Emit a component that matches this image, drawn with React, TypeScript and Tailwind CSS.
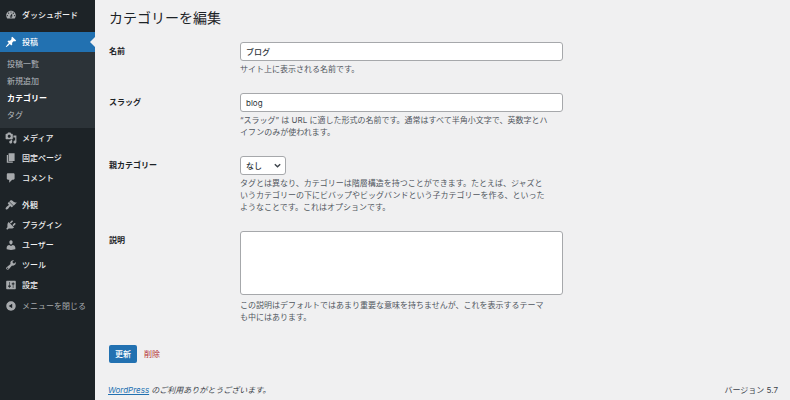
import { useState } from "react";
import type { ReactNode } from "react";
import clsx from "clsx";

const icons = {
  dashboard:
    "M3.76 16h12.48c1.1-1.37 1.76-3.11 1.76-5 0-4.42-3.58-8-8-8s-8 3.58-8 8c0 1.89.66 3.63 1.76 5zM10 4c.55 0 1 .45 1 1s-.45 1-1 1-1-.45-1-1 .45-1 1-1zM6 6c.55 0 1 .45 1 1s-.45 1-1 1-1-.45-1-1 .45-1 1-1zm8 0c.55 0 1 .45 1 1s-.45 1-1 1-1-.45-1-1 .45-1 1-1zm-5.37 5.55L12 7v6c0 1.1-.9 2-2 2s-2-.9-2-2c0-.57.24-1.08.63-1.45zM4 10c.55 0 1 .45 1 1s-.45 1-1 1-1-.45-1-1 .45-1 1-1zm12 0c.55 0 1 .45 1 1s-.45 1-1 1-1-.45-1-1 .45-1 1-1zm-5 3c0-.55-.45-1-1-1s-1 .45-1 1 .45 1 1 1 1-.45 1-1z",
  post: "M10.44 3.02l1.82-1.82 6.36 6.35-1.83 1.82c-1.05-.68-2.48-.57-3.41.36l-.75.75c-.92.93-1.04 2.35-.35 3.41l-1.83 1.82-2.41-2.41-2.8 2.79c-.42.42-3.38 2.71-3.8 2.29s1.86-3.39 2.28-3.81l2.79-2.79L4.1 9.36l1.83-1.82c1.05.69 2.48.57 3.4-.36l.75-.75c.93-.92 1.05-2.35.36-3.41z",
  media:
    "M13 11V4c0-.55-.45-1-1-1h-1.67L9 1H5L3.67 3H2c-.55 0-1 .45-1 1v7c0 .55.45 1 1 1h10c.55 0 1-.45 1-1zM7 4.5c1.38 0 2.5 1.12 2.5 2.5S8.38 9.5 7 9.5 4.5 8.38 4.5 7 5.62 4.5 7 4.5zM14 6h5v10.5c0 1.38-1.12 2.5-2.5 2.5S14 17.88 14 16.5s1.12-2.5 2.5-2.5c.17 0 .34.02.5.05V9h-3V6zm-4 8.05V13h2v3.5c0 1.38-1.12 2.5-2.5 2.5S7 17.88 7 16.5 8.12 14 9.5 14c.17 0 .34.02.5.05z",
  page: "M6 15V2h10v13H6zm-1 1h8v2H3V5h2v11z",
  comments:
    "M5 2h9c1.1 0 2 .9 2 2v7c0 1.1-.9 2-2 2h-2l-5 5v-5H5c-1.1 0-2-.9-2-2V4c0-1.1.9-2 2-2z",
  appearance:
    "M14.48 11.06L7.41 3.99l1.5-1.5c.5-.56 2.3-.47 3.51.32 1.21.8 1.43 1.28 2.91 2.1 1.18.64 2.45 1.26 4.45.85zm-.71.71L6.7 4.7 4.93 6.47c-.39.39-.39 1.02 0 1.41l1.06 1.06c.39.39.39 1.03 0 1.42-.6.6-1.43 1.11-2.21 1.69-.35.26-.7.53-1.01.84C1.43 14.23.4 16.08 1.4 17.07c.99 1 2.84-.03 4.18-1.36.31-.31.58-.66.85-1.02.57-.78 1.08-1.61 1.69-2.21.39-.39 1.02-.39 1.41 0l1.06 1.06c.39.39 1.02.39 1.41 0z",
  plugins:
    "M13.11 4.36L9.87 7.6 8 5.73l3.24-3.24c.35-.34 1.05-.2 1.56.32.52.51.66 1.21.31 1.55zm-8 1.77l.91-1.12 9.01 9.01-1.19.84c-.71.71-2.63 1.16-3.82 1.16H6.14L4.9 17.26c-.59.59-1.54.59-2.12 0-.59-.58-.59-1.53 0-2.12l1.24-1.24v-3.88c0-1.13.4-3.19 1.09-3.89zm7.26 3.97l3.24-3.24c.34-.35 1.04-.21 1.55.31.52.51.66 1.21.31 1.55l-3.24 3.25z",
  users:
    "M10 9.25c-2.27 0-2.73-3.44-2.73-3.44C7 4.02 7.82 2 9.97 2c2.16 0 2.98 2.02 2.71 3.81 0 0-.41 3.44-2.68 3.44zm0 2.57L12.72 10c2.39 0 4.52 2.33 4.52 4.53v2.49s-3.65 1.13-7.24 1.13c-3.65 0-7.24-1.13-7.24-1.13v-2.49c0-2.25 1.94-4.48 4.47-4.48z",
  tools:
    "M16.68 9.77c-1.34 1.34-3.3 1.67-4.95.99l-5.41 6.52c-.99.99-2.59.99-3.58 0s-.99-2.59 0-3.57l6.52-5.42c-.68-1.65-.35-3.61.99-4.95 1.28-1.28 3.12-1.62 4.72-1.06l-2.89 2.89 2.82 2.82 2.86-2.87c.53 1.58.18 3.39-1.08 4.65zM3.81 16.21c.4.39 1.04.39 1.43 0 .4-.4.4-1.04 0-1.43-.39-.4-1.03-.4-1.43 0-.39.39-.39 1.03 0 1.43z",
  settings:
    "M18 16V4c0-.55-.45-1-1-1H3c-.55 0-1 .45-1 1v12c0 .55.45 1 1 1h14c.55 0 1-.45 1-1zM8 11h1c.55 0 1 .45 1 1s-.45 1-1 1H8v1.5c0 .28-.22.5-.5.5s-.5-.22-.5-.5V13H6c-.55 0-1-.45-1-1s.45-1 1-1h1V5.5c0-.28.22-.5.5-.5s.5.22.5.5V11zm5-2h-1c-.55 0-1-.45-1-1s.45-1 1-1h1V5.5c0-.28.22-.5.5-.5s.5.22.5.5V7h1c.55 0 1 .45 1 1s-.45 1-1 1h-1v5.5c0 .28-.22.5-.5.5s-.5-.22-.5-.5V9z",
  collapse:
    "M10 2.16c4.33 0 7.84 3.51 7.84 7.84s-3.51 7.84-7.84 7.84S2.16 14.33 2.16 10 5.67 2.16 10 2.16zm2 11.72V6.12L6.18 9.97z",
};

type IconName = keyof typeof icons;

const contentMenu: { icon: IconName; label: string }[] = [
  { icon: "media", label: "メディア" },
  { icon: "page", label: "固定ページ" },
  { icon: "comments", label: "コメント" },
];

const adminMenu: { icon: IconName; label: string }[] = [
  { icon: "appearance", label: "外観" },
  { icon: "plugins", label: "プラグイン" },
  { icon: "users", label: "ユーザー" },
  { icon: "tools", label: "ツール" },
  { icon: "settings", label: "設定" },
];

const postSubmenu = ["投稿一覧", "新規追加", "カテゴリー", "タグ"];

const MenuIcon = ({ name }: { name: IconName }) => (
  <svg viewBox="0 0 20 20" className="size-3 shrink-0 fill-current" aria-hidden="true">
    <path d={icons[name]} />
  </svg>
);

const MenuItem = ({ icon, label, current }: { icon: IconName; label: string; current?: boolean }) => (
  <a
    href="#"
    className={clsx(
      "relative flex h-5 items-center gap-1 pl-[5px] font-medium",
      current ? "bg-[#2271b1] text-white" : "text-[#f0f0f1]",
    )}
  >
    <span className={clsx("flex w-[13px]", !current && "text-[#a7aaad]")}>
      <MenuIcon name={icon} />
    </span>
    {label}
    {current && (
      <span className="absolute right-0 top-[5px] border-y-5 border-r-5 border-y-transparent border-r-[#f0f0f1]" />
    )}
  </a>
);

const Sidebar = () => (
  <nav className="w-[95px] shrink-0 bg-[#1d2327] pt-[5px]">
    <MenuItem icon="dashboard" label="ダッシュボード" />
    <div className="mt-[7px]">
      <MenuItem icon="post" label="投稿" current />
      <ul className="bg-[#2c3338] py-1">
        {postSubmenu.map((item) => (
          <li key={item}>
            <a
              href="#"
              className={clsx(
                "block pl-[7px] leading-[17px]",
                item === "カテゴリー" ? "font-bold text-white" : "text-[#b4b9be]",
              )}
            >
              {item}
            </a>
          </li>
        ))}
      </ul>
    </div>
    {contentMenu.map((item) => (
      <MenuItem key={item.label} {...item} />
    ))}
    <div className="mt-[7px]">
      {adminMenu.map((item) => (
        <MenuItem key={item.label} {...item} />
      ))}
    </div>
    <button type="button" className="mt-px flex h-5 items-center gap-[5px] pl-[5px] text-[#a7aaad]">
      <MenuIcon name="collapse" />
      メニューを閉じる
    </button>
  </nav>
);

interface FieldRowProps {
  id: string;
  label: string;
  help: ReactNode;
  children: ReactNode;
}

const FieldRow = ({ id, label, help, children }: FieldRowProps) => (
  <div className="flex">
    <label htmlFor={id} className="w-[131px] shrink-0 pt-[3px] font-bold text-[#1d2327]">
      {label}
    </label>
    <div className="w-full max-w-[323px]">
      {children}
      <p className="mt-0.5 whitespace-nowrap text-[#50575e]">{help}</p>
    </div>
  </div>
);

const inputClass =
  "block h-[19px] w-full rounded-[3px] border border-[#a6a8ab] bg-white px-[5px] text-[#2c3338]";

export default function App() {
  const [name, setName] = useState("ブログ");
  const [slug, setSlug] = useState("blog");
  const [description, setDescription] = useState("");

  return (
    <div
      lang="ja"
      className="flex min-h-screen bg-[#f0f0f1] font-['Inter','Noto_Sans_CJK_JP',sans-serif] text-[8px] leading-3 text-[#3c434a]"
    >
      <Sidebar />
      <div className="flex min-w-0 flex-1 flex-col pl-[13px] pr-3">
        <main className="pl-px">
          <h1 className="pt-2 text-[14px] leading-5 text-[#1d2327]">カテゴリーを編集</h1>
          <form className="mt-[14px]" onSubmit={(e) => e.preventDefault()}>
            <div className="flex flex-col gap-[18px]">
              <FieldRow id="name" label="名前" help="サイト上に表示される名前です。">
                <input
                  id="name"
                  type="text"
                  value={name}
                  onChange={(e) => setName(e.target.value)}
                  className={clsx(inputClass, "font-medium")}
                />
              </FieldRow>
              <FieldRow
                id="slug"
                label="スラッグ"
                help={
                  <>
                    “スラッグ” は URL に適した形式の名前です。通常はすべて半角小文字で、英数字とハ
                    <br />
                    イフンのみが使われます。
                  </>
                }
              >
                <input
                  id="slug"
                  type="text"
                  value={slug}
                  onChange={(e) => setSlug(e.target.value)}
                  className={inputClass}
                />
              </FieldRow>
              <FieldRow
                id="parent"
                label="親カテゴリー"
                help={
                  <>
                    タグとは異なり、カテゴリーは階層構造を持つことができます。たとえば、ジャズと
                    <br />
                    いうカテゴリーの下にビバップやビッグバンドという子カテゴリーを作る、といった
                    <br />
                    ようなことです。これはオプションです。
                  </>
                }
              >
                <div className="relative w-[46px]">
                  <select
                    id="parent"
                    className="block h-[19px] w-full appearance-none rounded-[3px] border border-[#a6a8ab] bg-white pl-[5px] font-medium text-[#2c3338]"
                  >
                    <option>なし</option>
                  </select>
                  <svg
                    viewBox="0 0 20 20"
                    className="pointer-events-none absolute right-1 top-[5px] size-[9px]"
                    aria-hidden="true"
                  >
                    <path d="M4 7l6 6 6-6" fill="none" stroke="#3c434a" strokeWidth="3" />
                  </svg>
                </div>
              </FieldRow>
              <FieldRow
                id="description"
                label="説明"
                help={
                  <>
                    この説明はデフォルトではあまり重要な意味を持ちませんが、これを表示するテーマ
                    <br />
                    も中にはあります。
                  </>
                }
              >
                <textarea
                  id="description"
                  value={description}
                  onChange={(e) => setDescription(e.target.value)}
                  className="mb-1 block h-16 w-full resize-none rounded-[3px] border border-[#a6a8ab] bg-white px-[5px] py-1"
                />
              </FieldRow>
            </div>
            <div className="mt-[22px] flex items-center gap-[7px]">
              <button
                type="submit"
                className="h-[18px] rounded-[2px] bg-[#2271b1] px-[6px] font-medium text-white"
              >
                更新
              </button>
              <a href="#" className="text-[#b32d2e]">
                削除
              </a>
            </div>
          </form>
        </main>
        <footer className="mt-auto flex justify-between pb-1">
          <p className="italic">
            <a href="#" className="text-[#2271b1] underline">
              WordPress
            </a>{" "}
            のご利用ありがとうございます。
          </p>
          <p>バージョン 5.7</p>
        </footer>
      </div>
    </div>
  );
}
